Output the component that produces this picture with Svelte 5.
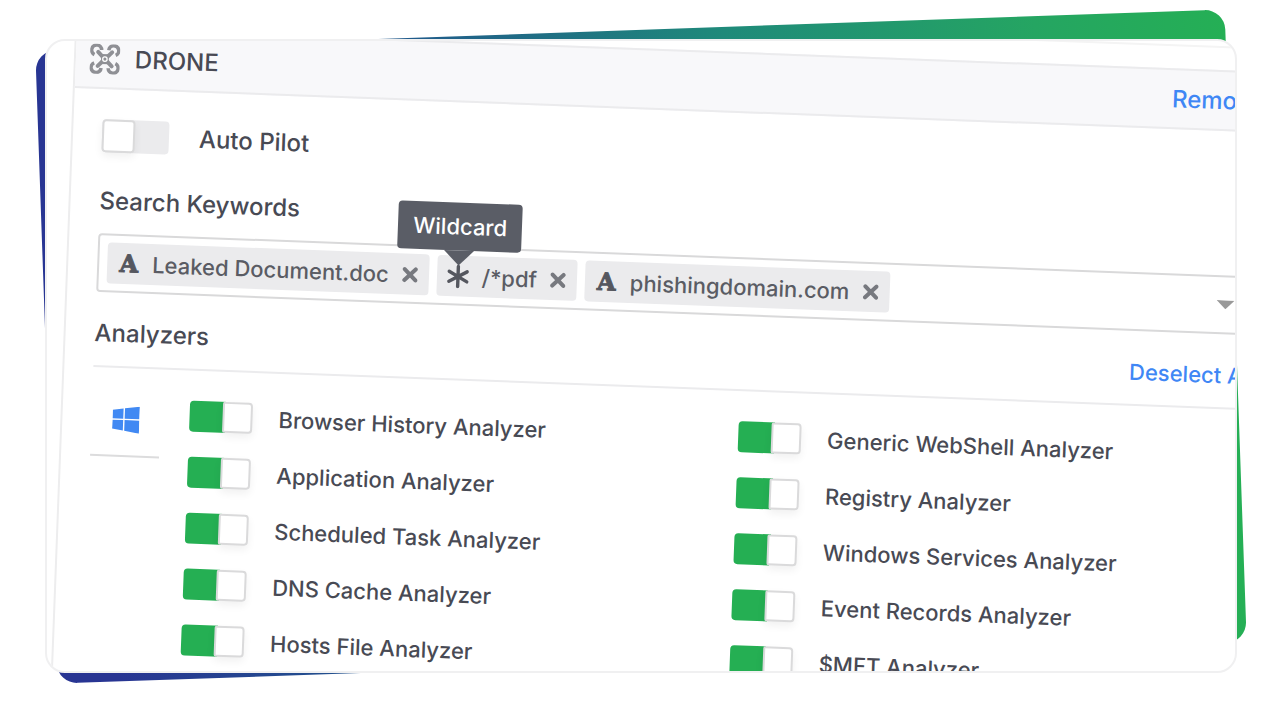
<script>
  let autoPilot = false;

  let keywords = [
    { id: 1, text: 'Leaked Document.doc', type: 'text' },
    { id: 2, text: '/*pdf', type: 'wildcard', tooltip: 'Wildcard' },
    { id: 3, text: 'phishingdomain.com', type: 'text' },
  ];

  // rows are filled left to right, two per line
  let analyzers = [
    { name: 'Browser History Analyzer', enabled: true },
    { name: 'Generic WebShell Analyzer', enabled: true },
    { name: 'Application Analyzer', enabled: true },
    { name: 'Registry Analyzer', enabled: true },
    { name: 'Scheduled Task Analyzer', enabled: true },
    { name: 'Windows Services Analyzer', enabled: true },
    { name: 'DNS Cache Analyzer', enabled: true },
    { name: 'Event Records Analyzer', enabled: true },
    { name: 'Hosts File Analyzer', enabled: true },
    { name: '$MFT Analyzer', enabled: true },
  ];

  function removeKeyword(id) {
    keywords = keywords.filter((k) => k.id !== id);
  }

  function deselectAll() {
    analyzers = analyzers.map((a) => ({ ...a, enabled: false }));
  }
</script>

<main class="page">
  <div class="stage">
    <div class="backdrop"></div>

    <div class="frame">
      <section class="panel">
        <header class="panel-header">
          <svg class="drone-icon" viewBox="0 0 30 30" aria-hidden="true">
            <g fill="none" stroke="#8f9095" stroke-width="3.6">
              <path d="M4.4 10.8A5 5 0 1 1 11.4 6" />
              <path d="M18.6 6A5 5 0 1 1 25.6 10.8" />
              <path d="M4.4 19.2A5 5 0 1 0 11.4 24" />
              <path d="M18.6 24A5 5 0 1 0 25.6 19.2" />
              <path d="M8 8L13 13M22 8L17 13M8 22L13 17M22 22L17 17" stroke-width="4" stroke-linecap="round" />
            </g>
            <path d="M10.5 10H19.5L18.8 15L19.5 20H10.5L11.2 15Z" fill="#8f9095" />
            <circle cx="15" cy="15" r="2.2" fill="#8f9095" stroke="#fff" stroke-width="1.3" />
          </svg>
          <h2>DRONE</h2>
          <button class="link">Remove</button>
        </header>

        <div class="panel-body">
          <label class="switch-row">
            <input type="checkbox" class="switch large" bind:checked={autoPilot} />
            <span>Auto Pilot</span>
          </label>

          <label class="field-label" for="keyword-input">Search Keywords</label>
          <div class="keyword-box">
            {#each keywords as keyword (keyword.id)}
              <div class="chip">
                <span class="chip-icon">
                  {#if keyword.type === 'wildcard'}
                    <svg viewBox="0 0 22 24" aria-hidden="true">
                      <path d="M11 2V22M2 7L20 17M20 7L2 17" stroke="#55575f" stroke-width="3.4" stroke-linecap="round" />
                    </svg>
                  {:else}
                    <span class="slab-a">A</span>
                  {/if}
                  {#if keyword.tooltip}
                    <span class="tooltip" role="tooltip">{keyword.tooltip}</span>
                  {/if}
                </span>
                <span>{keyword.text}</span>
                <button class="chip-remove" aria-label="Remove {keyword.text}" on:click={() => removeKeyword(keyword.id)}>
                  <svg viewBox="0 0 16 16" aria-hidden="true">
                    <path d="M2.5 2.5L13.5 13.5M13.5 2.5L2.5 13.5" stroke="#77797f" stroke-width="4" stroke-linecap="round" />
                  </svg>
                </button>
              </div>
            {/each}
            <input id="keyword-input" class="keyword-input" type="text" />
            <svg class="caret" viewBox="0 0 18 9" aria-hidden="true"><path d="M0 0H18L9 9Z" fill="#999" /></svg>
          </div>

          <div class="analyzers-head">
            <h3>Analyzers</h3>
            <button class="link small" on:click={deselectAll}>Deselect All</button>
          </div>

          <div class="analyzers">
            <button class="os-tab" aria-label="Windows">
              <svg viewBox="0 0 27 27" aria-hidden="true">
                <path d="M0 4L10.8 2.4V12.6H0ZM12.2 2.2L27 0V12.6H12.2ZM0 14H10.8V24.4L0 22.8ZM12.2 14H27V27L12.2 24.6Z" fill="#4189f3" />
              </svg>
            </button>
            <div class="analyzer-list">
              {#each analyzers as analyzer}
                <label class="switch-row small">
                  <input type="checkbox" class="switch" bind:checked={analyzer.enabled} />
                  <span>{analyzer.name}</span>
                </label>
              {/each}
            </div>
          </div>
        </div>
      </section>
    </div>
  </div>
</main>

<style>
  :global(body) { margin: 0; background: #fff; }

  .page {
    box-sizing: border-box; height: 100vh; padding: 39px 43px 47px 45px; overflow: hidden;
    font-family: Inter, 'Liberation Sans', sans-serif; font-weight: 500; color: #484a54;
  }
  .page *, .page *::before { box-sizing: border-box; }
  .stage { position: relative; height: 100%; }

  /* tilted gradient card behind the frame */
  .backdrop {
    position: absolute; inset: -9px 1px 10px; border-radius: 20px; transform: rotate(-2deg);
    background: linear-gradient(90deg, #283593 5%, #205c8b 32%, #1f8a7a 58%, #25a562 84%, #25af55 100%);
  }

  .frame {
    position: relative; height: 100%; overflow: hidden;
    background: #fff; border: 2px solid #f0f0f1; border-radius: 20px;
  }

  .panel {
    width: calc(100% + 32px); margin: -38px 0 0 29px; padding-top: 22px;
    border: 2px solid #ededee; border-top-color: #f4f4f4;
    transform: rotate(2.15deg); transform-origin: 0 0;
  }

  button { font: inherit; background: none; border: none; padding: 0; cursor: pointer; }
  h2, h3 { margin: 0; font-size: 24px; font-weight: 500; }
  .link { margin-left: auto; font-size: 24px; color: #3f87f5; }
  .link.small { font-size: 22px; }

  .panel-header {
    display: flex; align-items: center; gap: 15px; height: 61px; padding: 0 27px 0 14px;
    background: #f8f8fa; border-top: 2px solid #ebebed; border-bottom: 2px solid #ebebed;
  }
  .drone-icon { width: 30px; height: 30px; }

  .panel-body { padding: 30px 27px 28px 29px; font-size: 24px; line-height: 30px; }

  /* SWITCHES */
  .switch-row { display: flex; align-items: center; gap: 30px; width: fit-content; }
  .switch-row.small { gap: 26px; font-size: 22px; white-space: nowrap; }
  .switch {
    appearance: none; display: flex; flex: none; width: 63px; height: 31px; margin: 0;
    background: #ebebed; border-radius: 4px; cursor: pointer;
  }
  .switch::before {
    content: ''; width: 30px; background: #fff; border: 2px solid #dadadb; border-radius: 4px;
    box-shadow: 0 4px 8px rgba(0, 0, 0, 0.06);
  }
  .switch:checked { justify-content: flex-end; background: linear-gradient(90deg, #25af53 36px, #fff 36px); }
  .switch:checked::before { border-radius: 2px 4px 4px 2px; }
  .switch.large { width: 67px; height: 33px; }
  .switch.large::before { width: 33px; }

  /* KEYWORDS */
  .field-label { display: block; margin: 34px 0 17px; }
  .keyword-box {
    display: flex; align-items: center; gap: 8px; height: 59px; padding: 0 20px 0 8px;
    border: 2px solid #d9d9da; border-radius: 4px;
  }
  .chip {
    display: flex; align-items: center; gap: 13px; height: 41px; padding: 0 11px;
    background: #ebebed; border-radius: 4px; color: #5a5c64; font-size: 22px; white-space: nowrap;
  }
  .chip-icon { position: relative; display: flex; align-items: center; justify-content: center; width: 21px; height: 24px; }
  .chip-icon svg { flex: none; width: 22px; height: 24px; }
  .slab-a {
    font-family: 'DejaVu Serif', 'Liberation Serif', serif; font-weight: 700; font-size: 24px; color: #55575f;
    -webkit-text-stroke: 1px #55575f;
  }
  .chip-remove { display: flex; }
  .chip-remove svg { width: 16px; height: 16px; }
  .keyword-input { flex: 1; min-width: 0; border: none; outline: none; background: none; font: inherit; color: inherit; }
  .caret { flex: none; width: 18px; height: 9px; }

  .tooltip {
    position: absolute; bottom: calc(100% + 14px); left: 50%; transform: translateX(-50%);
    padding: 9px 15px; background: #5a5d66; border-radius: 4px; color: #fff;
  }
  .tooltip::after {
    content: ''; position: absolute; top: 100%; left: 50%; margin-left: -15px;
    border: 15px solid transparent; border-bottom: none; border-top-color: #5a5d66;
  }

  /* ANALYZERS */
  .analyzers-head {
    display: flex; align-items: center; height: 75px; padding-top: 8px;
    border-bottom: 2px solid #ebebed;
  }
  .analyzers { display: flex; gap: 29px; align-items: flex-start; }
  .os-tab {
    display: flex; align-items: center; justify-content: center; width: 69px; height: 89px; padding-top: 16px;
    border-bottom: 2px solid #dcdcdd;
  }
  .os-tab svg { width: 27px; height: 27px; }
  .analyzer-list { flex: 1; display: grid; grid-template-columns: 1fr 1fr; gap: 25px 36px; padding-top: 30px; }
</style>
